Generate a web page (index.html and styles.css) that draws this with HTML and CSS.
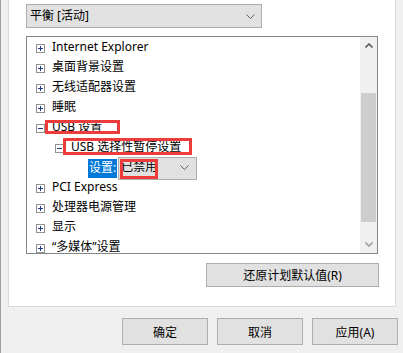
FILE: index.html
```html
<!DOCTYPE html>
<html lang="zh-CN">
    <head>
        <title>电源选项 - 高级设置</title>
        <meta charset="UTF-8">
        <link rel="stylesheet" href="styles.css">
    </head>

    <body>
        <div class="panel">
            <div class="combo plan-combo">
                <span>平衡 [活动]</span>
                <svg class="chevron" width="9" height="5" viewBox="0 0 9 5"><polyline points="0.5,0.5 4.5,4.5 8.5,0.5" fill="none" stroke="#606060" stroke-width="1"/></svg>
            </div>

            <div class="tree">
                <div class="rows">
                    <div class="row"><span class="toggle plus"></span><span class="label">Internet Explorer</span></div>
                    <div class="row"><span class="toggle plus"></span><span class="label">桌面背景设置</span></div>
                    <div class="row"><span class="toggle plus"></span><span class="label">无线适配器设置</span></div>
                    <div class="row"><span class="toggle plus"></span><span class="label">睡眠</span></div>
                    <div class="row"><span class="toggle minus"></span><span class="label">USB 设置</span></div>
                    <div class="row level-2"><span class="toggle minus"></span><span class="label">USB 选择性暂停设置</span></div>
                    <div class="row level-3">
                        <span class="setting-name">设置:</span>
                        <div class="combo value-combo">
                            <span>已禁用</span>
                            <svg class="chevron" width="9" height="5" viewBox="0 0 9 5"><polyline points="0.5,0.5 4.5,4.5 8.5,0.5" fill="none" stroke="#606060" stroke-width="1"/></svg>
                        </div>
                    </div>
                    <div class="row"><span class="toggle plus"></span><span class="label">PCI Express</span></div>
                    <div class="row"><span class="toggle plus"></span><span class="label">处理器电源管理</span></div>
                    <div class="row"><span class="toggle plus"></span><span class="label">显示</span></div>
                    <div class="row"><span class="toggle plus"></span><span class="label">“多媒体”设置</span></div>
                </div>

                <div class="scrollbar">
                    <div class="arrow">
                        <svg width="8" height="5" viewBox="0 0 8 5"><polyline points="0.5,4.5 4,1 7.5,4.5" fill="none" stroke="#606060" stroke-width="1.6"/></svg>
                    </div>
                    <div class="thumb"></div>
                    <div class="arrow arrow-down">
                        <svg width="8" height="5" viewBox="0 0 8 5"><polyline points="0.5,0.5 4,4 7.5,0.5" fill="none" stroke="#a0a0a0" stroke-width="1.6"/></svg>
                    </div>
                </div>

                <!-- red annotation boxes -->
                <div class="mark mark-usb"></div>
                <div class="mark mark-suspend"></div>
                <div class="mark mark-value"></div>
            </div>

            <div class="button restore">还原计划默认值(R)</div>
        </div>

        <div class="footer">
            <div class="button">确定</div>
            <div class="button">取消</div>
            <div class="button">应用(A)</div>
        </div>
    </body>
</html>
```

FILE: styles.css
```css
body {
    margin: 0;
    width: 403px;
    height: 353px;
    box-sizing: border-box;
    background-color: #f0f0f0;
    border-left: 1px solid #a0a0a0;
    font-family: "Noto Sans", "Noto Sans CJK SC", sans-serif;
    font-size: 12px;
    color: #000;
    overflow: hidden;
}
.panel {
    margin-left: 7px;
    width: 388px;
    height: 307px;
    box-sizing: border-box;
    background-color: #ffffff;
    border: 1px solid #d9d9d9;
    border-top: none;
    padding-top: 4px;
    padding-left: 17px;
}

.combo {
    display: flex;
    align-items: center;
    justify-content: space-between;
    box-sizing: border-box;
    background-color: #e1e1e1;
    border: 1px solid #adadad;
    line-height: 16px;
}
.plan-combo {
    width: 236px;
    height: 24px;
    padding: 0 6px 0 3px;
}
.chevron {
    display: block;
}

.tree {
    position: relative;
    display: flex;
    margin-top: 8px;
    width: 352px;
    height: 218px;
    box-sizing: border-box;
    border: 1px solid #828790;
    overflow: hidden;
}
.rows {
    flex: 1;
    padding-top: 1px;
}
.row {
    display: flex;
    align-items: center;
    height: 20px;
    padding-left: 9px;
    white-space: nowrap;
}
.level-2 {
    padding-left: 28px;
}
.level-3 {
    padding-left: 61px;
}
.toggle {
    position: relative;
    width: 9px;
    height: 9px;
    box-sizing: border-box;
    border: 1px solid #919191;
    flex-shrink: 0;
}
.toggle::before,
.plus::after {
    content: "";
    position: absolute;
    background-color: #1c3c7c;
}
.toggle::before {
    left: 1px;
    top: 3px;
    width: 5px;
    height: 1px;
}
.plus::after {
    left: 3px;
    top: 1px;
    width: 1px;
    height: 5px;
}
.label {
    margin-left: 7px;
    line-height: 16px;
    padding-bottom: 2px;
}
.setting-name {
    background-color: #0078d7;
    color: #ffffff;
    padding: 0 1px;
    height: 19px;
    line-height: 18px;
}
.value-combo {
    width: 79px;
    height: 23px;
    margin-left: 1px;
    padding: 0 7px 2px 2px;
}

.scrollbar {
    display: flex;
    flex-direction: column;
    width: 17px;
    background-color: #f0f0f0;
}
.arrow {
    display: flex;
    align-items: center;
    justify-content: center;
    height: 17px;
    flex-shrink: 0;
}
.arrow-down {
    margin-top: auto;
}
.thumb {
    margin: 39px 1px 0 1px;
    height: 129px;
    background-color: #cdcdcd;
}

.mark {
    position: absolute;
    box-sizing: border-box;
    border: 3px solid #ee3b3b;
}
.mark-usb {
    left: 18px;
    top: 83px;
    width: 75px;
    height: 14px;
}
.mark-suspend {
    left: 36px;
    top: 101px;
    width: 129px;
    height: 17px;
}
.mark-value {
    left: 93px;
    top: 122px;
    width: 38px;
    height: 20px;
}

.button {
    display: flex;
    align-items: center;
    justify-content: center;
    box-sizing: border-box;
    background-color: #e1e1e1;
    border: 1px solid #adadad;
}
.restore {
    margin-top: 9px;
    margin-left: 180px;
    width: 173px;
    height: 24px;
}
.footer {
    display: flex;
    justify-content: flex-end;
    gap: 9px;
    padding-top: 11px;
    padding-right: 5px;
}
.footer .button {
    width: 86px;
    height: 27px;
}
```
